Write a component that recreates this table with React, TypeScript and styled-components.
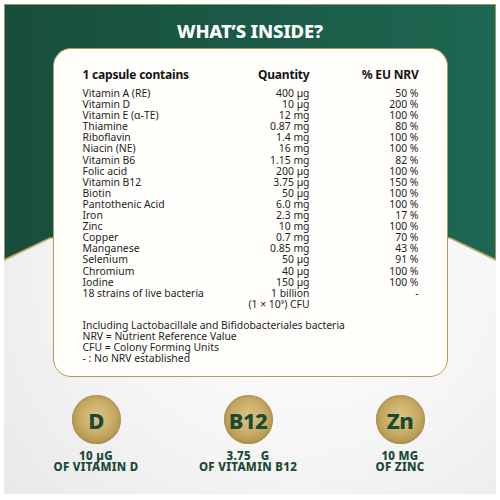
import React from "react";
import styled, { createGlobalStyle } from "styled-components";

const NUTRIENTS = [
  { name: "Vitamin A (RE)", qty: "400 µg", nrv: "50 %" },
  { name: "Vitamin D", qty: "10 µg", nrv: "200 %" },
  { name: "Vitamin E (α-TE)", qty: "12 mg", nrv: "100 %" },
  { name: "Thiamine", qty: "0.87 mg", nrv: "80 %" },
  { name: "Riboflavin", qty: "1.4 mg", nrv: "100 %" },
  { name: "Niacin (NE)", qty: "16 mg", nrv: "100 %" },
  { name: "Vitamin B6", qty: "1.15 mg", nrv: "82 %" },
  { name: "Folic acid", qty: "200 µg", nrv: "100 %" },
  { name: "Vitamin B12", qty: "3.75 µg", nrv: "150 %" },
  { name: "Biotin", qty: "50 µg", nrv: "100 %" },
  { name: "Pantothenic Acid", qty: "6.0 mg", nrv: "100 %" },
  { name: "Iron", qty: "2.3 mg", nrv: "17 %" },
  { name: "Zinc", qty: "10 mg", nrv: "100 %" },
  { name: "Copper", qty: "0.7 mg", nrv: "70 %" },
  { name: "Manganese", qty: "0.85 mg", nrv: "43 %" },
  { name: "Selenium", qty: "50 µg", nrv: "91 %" },
  { name: "Chromium", qty: "40 µg", nrv: "100 %" },
  { name: "Iodine", qty: "150 µg", nrv: "100 %" },
];

const NOTES = [
  "Including Lactobacillale and Bifidobacteriales bacteria",
  "NRV = Nutrient Reference Value",
  "CFU = Colony Forming Units",
  "- : No NRV established",
];

const BADGES = [
  { symbol: "D", amount: "10 µG", label: "OF VITAMIN D" },
  { symbol: "B12", amount: "3.75 \u00a0 G", label: "OF VITAMIN B12" },
  { symbol: "Zn", amount: "10 MG", label: "OF ZINC" },
];

const GlobalStyle = createGlobalStyle`
  html, body {
    margin: 0;
    padding: 0;
    background: #ffffff;
  }
  body {
    font-family: "Noto Sans", "Liberation Sans", sans-serif;
  }
`;

const Page = styled.div`
  width: 500px;
  height: 500px;
  padding: 4px;
  box-sizing: border-box;
  background: #ffffff;
`;

const Frame = styled.div`
  position: relative;
  width: 492px;
  height: 490px;
  overflow: hidden;
  display: flex;
  flex-direction: column;
  align-items: center;
  background: radial-gradient(ellipse at 60% 55%, #ffffff 0%, #f6f6f6 45%, #e6e6e6 100%);
`;

const Banner = styled.svg`
  position: absolute;
  top: 0;
  left: 0;
  z-index: 0;
`;

const Title = styled.h1`
  position: relative;
  z-index: 1;
  margin: 15px 0 0;
  font-family: "Noto Sans", sans-serif;
  font-weight: 800;
  font-size: 18.5px;
  line-height: 24px;
  color: #ffffff;
  letter-spacing: -0.2px;
`;

const Card = styled.div`
  position: relative;
  z-index: 1;
  margin-top: 5px;
  width: 395px;
  height: 329px;
  box-sizing: border-box;
  padding: 18px 30px 0 29px;
  background: #fffefb;
  border: 1.5px solid #b99a55;
  border-radius: 18px;
`;

const Table = styled.div`
  display: grid;
  grid-template-columns: 137px 90px 109px;
  font-size: 10.4px;
  line-height: 11.1px;
  color: #1d1d1d;
`;

const HeadCell = styled.div<{ $right?: boolean }>`
  font-weight: 700;
  font-size: 12px;
  line-height: 16px;
  letter-spacing: -0.2px;
  color: #141414;
  text-align: ${(p) => (p.$right ? "right" : "left")};
  margin-bottom: 5px;
`;

const Cell = styled.div<{ $right?: boolean }>`
  text-align: ${(p) => (p.$right ? "right" : "left")};
  white-space: nowrap;
`;

const Sup = styled.sup`
  font-size: 6px;
  line-height: 0;
`;

const Notes = styled.div`
  margin-top: 10px;
  font-size: 10.4px;
  line-height: 11px;
  color: #1d1d1d;
`;

const Badges = styled.div`
  position: relative;
  z-index: 1;
  margin-top: 18px;
  display: grid;
  grid-template-columns: repeat(3, 152px);
  padding-right: 4px;
`;

const Badge = styled.div`
  display: flex;
  flex-direction: column;
  align-items: center;
`;

const Coin = styled.div`
  width: 49px;
  height: 49px;
  border-radius: 50%;
  display: flex;
  align-items: center;
  justify-content: center;
  background: radial-gradient(circle at 50% 45%, #dcc588 0%, #c9ad66 45%, #a88a43 85%, #9c7e3a 100%);
  box-shadow: inset 0 0 2px rgba(90, 70, 20, 0.5);
  font-weight: 800;
  font-size: 22px;
  color: #1b4a34;
  letter-spacing: -0.5px;
`;

const BadgeText = styled.div`
  margin-top: 6px;
  text-align: center;
  font-weight: 800;
  font-size: 11.5px;
  line-height: 11px;
  letter-spacing: 0.3px;
  color: #1b4a34;
`;

export default function App() {
  return (
    <>
      <GlobalStyle />
      <Page>
        <Frame>
          <Banner width="492" height="262" viewBox="0 0 492 262">
            <defs>
              <linearGradient id="bannerFill" x1="0" y1="0" x2="1" y2="0">
                <stop offset="0" stopColor="#174e3b" />
                <stop offset="1" stopColor="#1e6752" />
              </linearGradient>
            </defs>
            <polygon
              points="0,0 492,0 492,256 446,234 46,234 0,256"
              fill="url(#bannerFill)"
              stroke="#c3a564"
              strokeWidth="1.6"
            />
          </Banner>
          <Title>WHAT’S INSIDE?</Title>
          <Card>
            <Table>
              <HeadCell>1 capsule contains</HeadCell>
              <HeadCell $right>Quantity</HeadCell>
              <HeadCell $right>% EU NRV</HeadCell>
              {NUTRIENTS.map((n) => (
                <React.Fragment key={n.name}>
                  <Cell>{n.name}</Cell>
                  <Cell $right>{n.qty}</Cell>
                  <Cell $right>{n.nrv}</Cell>
                </React.Fragment>
              ))}
              <Cell>18 strains of live bacteria</Cell>
              <Cell $right>
                1 billion
                <br />
                (1 × 10<Sup>9</Sup>) CFU
              </Cell>
              <Cell $right>-</Cell>
            </Table>
            <Notes>
              {NOTES.map((line) => (
                <div key={line}>{line}</div>
              ))}
            </Notes>
          </Card>
          <Badges>
            {BADGES.map((b) => (
              <Badge key={b.symbol}>
                <Coin>{b.symbol}</Coin>
                <BadgeText>
                  {b.amount}
                  <br />
                  {b.label}
                </BadgeText>
              </Badge>
            ))}
          </Badges>
        </Frame>
      </Page>
    </>
  );
}
